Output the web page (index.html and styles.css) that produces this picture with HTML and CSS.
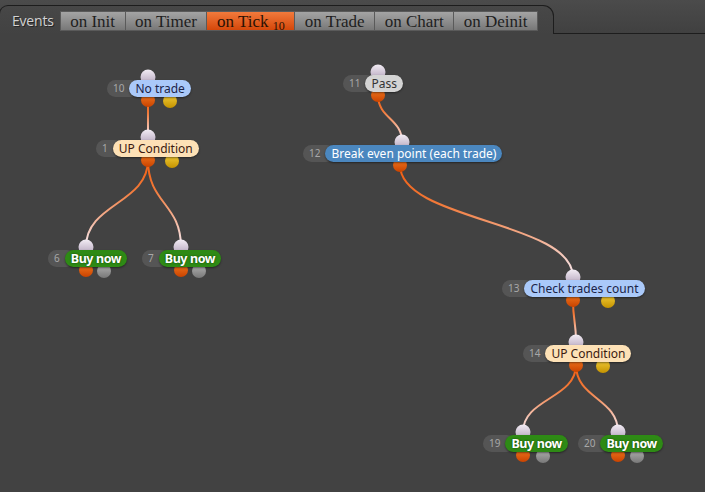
FILE: index.html
```html
<!DOCTYPE html>
<html>
<head>
    <title>Events</title>
    <link rel="stylesheet" href="styles.css">
</head>
<body>

<div class="topbar">
    <div class="panel">
        <span class="panel-title">Events</span>
        <div class="tabs">
            <span class="tab">on Init</span>
            <span class="tab">on Timer</span>
            <span class="tab active">on Tick <sub>10</sub></span>
            <span class="tab">on Trade</span>
            <span class="tab">on Chart</span>
            <span class="tab">on Deinit</span>
        </div>
    </div>
    <div class="topbar-rest"></div>
</div>

<div class="canvas" id="canvas">
    <svg id="wires" width="705" height="458"></svg>
</div>

<script>
// x = left of number pill, y = top of pill (canvas coords), pin = x of in/out pins
const nodes = [
    { id: 10, x: 107, y: 46, text: "No trade", kind: "blue", pin: 148, extra: { x: 170, c: "yellow" } },
    { id: 1, x: 96, y: 106, text: "UP Condition", kind: "peach", pin: 148, extra: { x: 172, c: "yellow" } },
    { id: 6, x: 48, y: 216, text: "Buy now", kind: "green", pin: 86, extra: { x: 104, c: "gray" } },
    { id: 7, x: 142, y: 216, text: "Buy now", kind: "green", pin: 181, extra: { x: 199, c: "gray" } },
    { id: 11, x: 343, y: 41, text: "Pass", kind: "pass", pin: 378 },
    { id: 12, x: 303, y: 111, text: "Break even point (each trade)", kind: "steel", pin: 402, out: 400 },
    { id: 13, x: 502, y: 246, text: "Check trades count", kind: "blue", pin: 573, extra: { x: 608, c: "yellow" } },
    { id: 14, x: 523, y: 311, text: "UP Condition", kind: "peach", pin: 576, extra: { x: 603, c: "yellow" } },
    { id: 19, x: 483, y: 401, text: "Buy now", kind: "green", pin: 523, extra: { x: 543, c: "gray" } },
    { id: 20, x: 578, y: 401, text: "Buy now", kind: "green", pin: 618, extra: { x: 637, c: "gray" } }
];

const links = [[10, 1], [1, 6], [1, 7], [11, 12], [12, 13], [13, 14], [14, 19], [14, 20]];

const canvas = document.getElementById("canvas");
const svg = document.getElementById("wires");
const byId = {};
nodes.forEach(n => byId[n.id] = n);

let defs = `<defs>
    <linearGradient id="g-in" x1="0" y1="0" x2="0" y2="1"><stop offset="0" stop-color="#f2ecf4"/><stop offset="1" stop-color="#b3a3bb"/></linearGradient>
    <linearGradient id="g-out" x1="0" y1="0" x2="0" y2="1"><stop offset="0" stop-color="#f57c22"/><stop offset="1" stop-color="#c94300"/></linearGradient>
    <linearGradient id="g-yellow" x1="0" y1="0" x2="0" y2="1"><stop offset="0" stop-color="#f6cf3a"/><stop offset="1" stop-color="#c49300"/></linearGradient>
    <linearGradient id="g-gray" x1="0" y1="0" x2="0" y2="1"><stop offset="0" stop-color="#b4b4b4"/><stop offset="1" stop-color="#787878"/></linearGradient>`;
let wires = "";
let pins = "";

links.forEach(([a, b], i) => {
    const p = byId[a], c = byId[b];
    const x1 = p.out || p.pin, y1 = p.y + 20;
    const x2 = c.pin, y2 = c.y - 3;
    const d = (y2 - y1) * 0.5;
    defs += `<linearGradient id="w${i}" gradientUnits="userSpaceOnUse" x1="0" y1="${y1}" x2="0" y2="${y2}">
        <stop offset="0" stop-color="#f25c0e"/><stop offset="0.35" stop-color="#f27a3a"/><stop offset="1" stop-color="#f6eaf2"/></linearGradient>`;
    wires += `<path d="M${x1} ${y1} C${x1} ${y1 + d}, ${x2} ${y2 - d}, ${x2} ${y2}" fill="none" stroke="url(#w${i})" stroke-width="2"/>`;
});

nodes.forEach(n => {
    pins += `<circle cx="${n.pin}" cy="${n.y - 3}" r="7.5" fill="url(#g-in)"/>`;
    pins += `<circle cx="${n.out || n.pin}" cy="${n.y + 20}" r="7" fill="url(#g-out)"/>`;
    if (n.extra) pins += `<circle cx="${n.extra.x}" cy="${n.y + 21}" r="7" fill="url(#g-${n.extra.c})"/>`;

    const el = document.createElement("div");
    el.className = "node";
    el.style.left = n.x + "px";
    el.style.top = n.y + "px";
    el.innerHTML = `<span class="num">${n.id}</span><span class="label ${n.kind}">${n.text}</span>`;
    canvas.appendChild(el);
});

svg.innerHTML = defs + "</defs>" + wires + pins;
</script>

</body>
</html>
```

FILE: styles.css
```css
body {
    margin: 0;
    background: #424242;
    font-family: 'Noto Sans', 'Open Sans', sans-serif;
    overflow: hidden;
}
.topbar {
    display: flex;
    height: 34px;
    background: linear-gradient(#4b4b4b, #404040);
}
.panel {
    box-sizing: border-box;
    width: 555px;
    height: 29px;
    margin-top: 5px;
    margin-left: -1px;
    padding: 5px 0 0 12px;
    border: 1px solid #1d1d1d;
    border-bottom: none;
    border-radius: 9px 11px 0 0;
    background: linear-gradient(#474747, #424242);
    display: flex;
    align-items: flex-start;
    gap: 6px;
}
.panel-title {
    font-family: 'Open Sans', sans-serif;
    font-size: 14px;
    line-height: 19px;
    color: #d2d2d2;
    text-shadow: 1px 1px 0 #262626;
    letter-spacing: -0.2px;
}
.tabs {
    display: flex;
    border: 1px solid #5a5a5a;
}
.tab {
    height: 18px;
    line-height: 19px;
    padding: 0 9.5px;
    font-family: 'Liberation Serif', serif;
    font-size: 17px;
    color: #1e1e1e;
    background: linear-gradient(#a4a4a4, #787878);
    border-left: 1px solid #5a5a5a;
    white-space: nowrap;
}
.tab:first-child {
    border-left: none;
}
.tab.active {
    background: linear-gradient(#f27a3c, #d4470a);
    color: #2a1104;
}
.tab sub {
    font-size: 12px;
    vertical-align: -3px;
    line-height: 0;
}
.topbar-rest {
    flex: 1;
    border-bottom: 1px solid #1d1d1d;
}
.canvas {
    position: relative;
    height: 458px;
}
#wires {
    position: absolute;
    left: 0;
    top: 0;
}
.node {
    position: absolute;
    display: flex;
    height: 17px;
    white-space: nowrap;
}
.num {
    padding: 0 15px 0 6px;
    margin-right: -10px;
    border-radius: 9px;
    background: #555;
    color: #a8a8a8;
    font-size: 10px;
    line-height: 17px;
}
.label {
    position: relative;
    padding: 0 6px;
    border-radius: 9px;
    font-size: 12px;
    line-height: 17px;
    box-shadow: 0 1px 2px rgba(0, 0, 0, 0.45);
}
.blue {
    background: #aac9f9;
    color: #1b2347;
}
.peach {
    background: #fde1b6;
    color: #3b1a10;
}
.pass {
    background: #d4d4d4;
    color: #333;
}
.steel {
    background: #4b87bf;
    color: #fff;
}
.green {
    background: #2e8a15;
    color: #fff;
    font-weight: bold;
    font-size: 12.5px;
    letter-spacing: -0.4px;
    text-shadow: 0 0 2px #0c3a00;
}
```
